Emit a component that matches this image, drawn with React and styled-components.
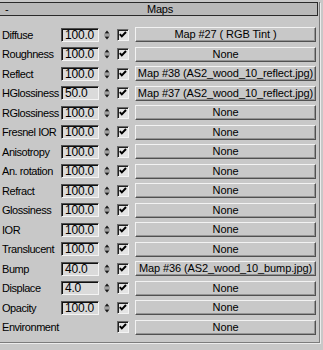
import React from "react";
import styled, { createGlobalStyle } from "styled-components";

const Global = createGlobalStyle`
  html, body { margin: 0; padding: 0; }
  body {
    background: #c8c8c8;
    width: 323px;
    height: 350px;
    overflow: hidden;
    font-family: "Liberation Sans", Arial, sans-serif;
    font-size: 11px;
    color: #000;
  }
`;

const Frame = styled.div`
  margin-top: 2px;
  margin-left: -2px;
  width: 322px;
  height: 341px;
  border-right: 1px solid #7c7c7c;
  border-bottom: 1px solid #7c7c7c;
  box-shadow: 1px 1px 0 #ececec;
  box-sizing: border-box;
`;

const Header = styled.div`
  display: flex;
  align-items: center;
  height: 14px;
  width: 320px;
  box-sizing: border-box;
  background: #b9b9b9;
  border: 1px solid #2a2a2a;
`;

const Dash = styled.span`
  width: 12px;
  padding-left: 6px;
  font-size: 11px;
  line-height: 12px;
`;

const Title = styled.span`
  flex: 1;
  text-align: center;
  padding-right: 14px;
  line-height: 12px;
  letter-spacing: -0.2px;
`;

const Rows = styled.div`
  display: grid;
  grid-auto-rows: 19.5px;
  padding-top: 9px;
  padding-left: 2px;
`;

const Row = styled.div`
  display: grid;
  grid-template-columns: 61px 38px 4px 8px 6px 12px 6px 181px;
  align-items: center;
`;

const Label = styled.span`
  padding-left: 2px;
  white-space: nowrap;
  letter-spacing: -0.45px;
  grid-column: ${(p) => (p.$wide ? "1 / 5" : "1")};
`;

const Input = styled.div`
  grid-column: 2;
  height: 14px;
  box-sizing: border-box;
  border-top: 1px solid #505050;
  border-left: 1px solid #505050;
  border-bottom: 1px solid #f4f4f4;
  border-right: 1px solid #f4f4f4;
  box-shadow: inset 1px 1px 0 #101010;
  background: #dadada;
  padding-left: 3px;
  line-height: 12px;
  font-size: 12px;
  letter-spacing: -0.2px;
`;

const SpinWrap = styled.div`
  grid-column: 4;
  display: flex;
  height: 14px;
`;

const CheckWrap = styled.div`
  grid-column: 6;
  width: 12px;
  height: 12px;
  box-sizing: border-box;
  border-top: 1px solid #6a6a6a;
  border-left: 1px solid #6a6a6a;
  border-bottom: 1px solid #f4f4f4;
  border-right: 1px solid #f4f4f4;
  box-shadow: inset 1px 1px 0 #202020;
  background: #e4e4e4;
  display: flex;
`;

const MapButton = styled.div`
  grid-column: 8;
  height: 15px;
  box-sizing: border-box;
  border-top: 1px solid #f2f2f2;
  border-left: 1px solid #f2f2f2;
  border-bottom: 1px solid #505050;
  border-right: 1px solid #505050;
  box-shadow: inset -1px -1px 0 #949494;
  background: #c8c8c8;
  text-align: center;
  line-height: 13px;
  white-space: nowrap;
  overflow: hidden;
  letter-spacing: -0.1px;
`;

const Spinner = () => (
  <SpinWrap>
    <svg width="8" height="14" viewBox="0 0 8 14">
      <polygon points="1.5,5.5 4,2.5 6.5,5.5" fill="#1a1a1a" />
      <line x1="1" y1="7" x2="7" y2="7" stroke="#7a7a7a" strokeWidth="1" />
      <polygon points="1.5,8.5 6.5,8.5 4,11.5" fill="#1a1a1a" />
    </svg>
  </SpinWrap>
);

const Check = () => (
  <CheckWrap>
    <svg width="10" height="10" viewBox="0 0 10 10">
      <path d="M1.8 4.2 L3.8 6.4 L8 2" fill="none" stroke="#000" strokeWidth="2" />
    </svg>
  </CheckWrap>
);

const data = [
  ["Diffuse", "100.0", "Map #27  ( RGB Tint )"],
  ["Roughness", "100.0", "None"],
  ["Reflect", "100.0", "Map #38 (AS2_wood_10_reflect.jpg)"],
  ["HGlossiness", "50.0", "Map #37 (AS2_wood_10_reflect.jpg)"],
  ["RGlossiness", "100.0", "None"],
  ["Fresnel IOR", "100.0", "None"],
  ["Anisotropy", "100.0", "None"],
  ["An. rotation", "100.0", "None"],
  ["Refract", "100.0", "None"],
  ["Glossiness", "100.0", "None"],
  ["IOR", "100.0", "None"],
  ["Translucent", "100.0", "None"],
  ["Bump", "40.0", "Map #36 (AS2_wood_10_bump.jpg)"],
  ["Displace", "4.0", "None"],
  ["Opacity", "100.0", "None"],
  ["Environment", null, "None"],
];

export default function App() {
  return (
    <>
      <Global />
      <Frame>
        <Header>
          <Dash>-</Dash>
          <Title>Maps</Title>
        </Header>
        <Rows>
          {data.map(([label, value, map]) => (
            <Row key={label}>
              <Label $wide={value === null}>{label}</Label>
              {value !== null && <Input>{value}</Input>}
              {value !== null && <Spinner />}
              <Check />
              <MapButton>{map}</MapButton>
            </Row>
          ))}
        </Rows>
      </Frame>
    </>
  );
}
